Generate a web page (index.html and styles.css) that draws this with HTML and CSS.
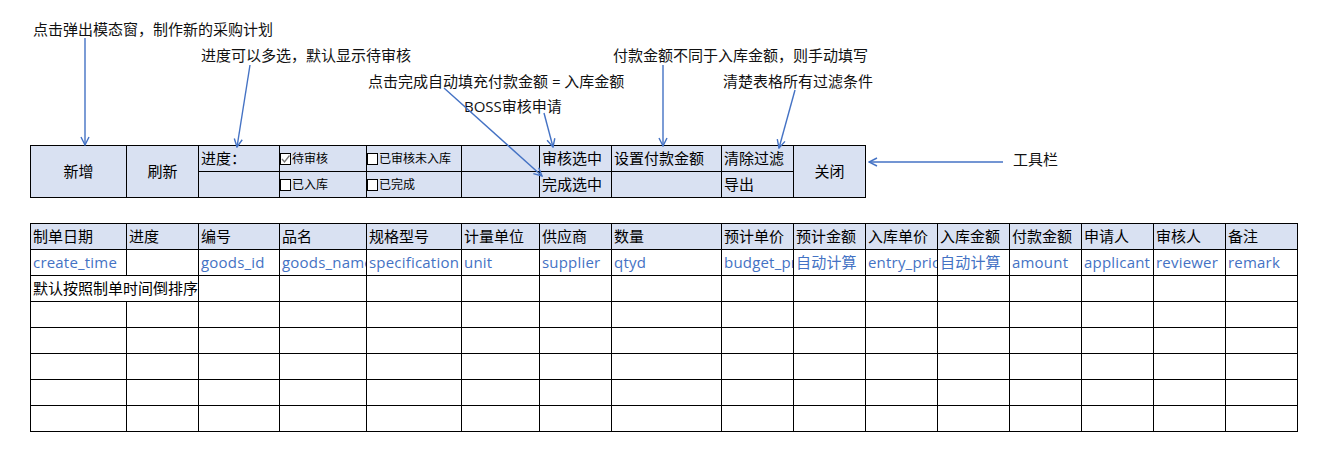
FILE: index.html
```html
<!DOCTYPE html>
<html lang="zh-CN">
<head>
    <meta charset="UTF-8">
    <meta name="viewport" content="width=device-width, initial-scale=1.0">
    <title>采购计划</title>
    <link rel="stylesheet" href="styles.css">
</head>
<body>
    <div class="sheet">
        <!-- 说明文字 -->
        <div class="note note-add">点击弹出模态窗，制作新的采购计划</div>
        <div class="note note-progress">进度可以多选，默认显示待审核</div>
        <div class="note note-finish">点击完成自动填充付款金额 = 入库金额</div>
        <div class="note note-boss">BOSS审核申请</div>
        <div class="note note-pay">付款金额不同于入库金额，则手动填写</div>
        <div class="note note-clear">清楚表格所有过滤条件</div>
        <div class="note note-toolbar">工具栏</div>

        <svg class="arrows" width="1332" height="461" viewBox="0 0 1332 461">
            <defs>
                <marker id="head" markerWidth="10" markerHeight="10" refX="9" refY="5" orient="auto" markerUnits="userSpaceOnUse">
                    <path d="M1,1 L9,5 L1,9" fill="none" stroke="#4472c4" stroke-width="1.4"/>
                </marker>
            </defs>
            <g stroke="#4472c4" stroke-width="1.4" fill="none" marker-end="url(#head)">
                <line x1="85" y1="38" x2="85" y2="145"/>
                <line x1="250" y1="65" x2="237" y2="147"/>
                <line x1="444" y1="88" x2="542" y2="176"/>
                <line x1="544" y1="113" x2="553" y2="147"/>
                <line x1="663" y1="65" x2="663" y2="146"/>
                <line x1="795" y1="90" x2="779" y2="148"/>
                <line x1="1003" y1="162" x2="869" y2="162"/>
            </g>
        </svg>

        <!-- 工具栏 -->
        <div class="toolbar">
            <div class="cell big">新增</div>
            <div class="cell big">刷新</div>
            <div class="cell">进度：</div>
            <div class="cell check"><span class="box"><svg width="9" height="10" viewBox="0 0 9 10"><path d="M1,5 L3.5,8 L8.5,1.5" fill="none" stroke="#777" stroke-width="1.3"/></svg></span>待审核</div>
            <div class="cell check"><span class="box"></span>已审核未入库</div>
            <div class="cell"></div>
            <div class="cell">审核选中</div>
            <div class="cell">设置付款金额</div>
            <div class="cell">清除过滤</div>
            <div class="cell big">关闭</div>
            <div class="cell"></div>
            <div class="cell check"><span class="box"></span>已入库</div>
            <div class="cell check"><span class="box"></span>已完成</div>
            <div class="cell"></div>
            <div class="cell">完成选中</div>
            <div class="cell"></div>
            <div class="cell">导出</div>
        </div>

        <!-- 采购计划表 -->
        <div class="grid">
            <div class="cell head">制单日期</div>
            <div class="cell head">进度</div>
            <div class="cell head">编号</div>
            <div class="cell head">品名</div>
            <div class="cell head">规格型号</div>
            <div class="cell head">计量单位</div>
            <div class="cell head">供应商</div>
            <div class="cell head">数量</div>
            <div class="cell head">预计单价</div>
            <div class="cell head">预计金额</div>
            <div class="cell head">入库单价</div>
            <div class="cell head">入库金额</div>
            <div class="cell head">付款金额</div>
            <div class="cell head">申请人</div>
            <div class="cell head">审核人</div>
            <div class="cell head">备注</div>

            <div class="cell field">create_time</div>
            <div class="cell field"></div>
            <div class="cell field">goods_id</div>
            <div class="cell field">goods_name</div>
            <div class="cell field">specification</div>
            <div class="cell field">unit</div>
            <div class="cell field">supplier</div>
            <div class="cell field">qtyd</div>
            <div class="cell field">budget_price</div>
            <div class="cell field">自动计算</div>
            <div class="cell field">entry_price</div>
            <div class="cell field">自动计算</div>
            <div class="cell field">amount</div>
            <div class="cell field">applicant</div>
            <div class="cell field">reviewer</div>
            <div class="cell field">remark</div>

            <div class="cell wide">默认按照制单时间倒排序</div>
            <div class="cell"></div><div class="cell"></div><div class="cell"></div><div class="cell"></div><div class="cell"></div><div class="cell"></div><div class="cell"></div>
            <div class="cell"></div><div class="cell"></div><div class="cell"></div><div class="cell"></div><div class="cell"></div><div class="cell"></div><div class="cell"></div>

            <div class="cell"></div><div class="cell"></div><div class="cell"></div><div class="cell"></div><div class="cell"></div><div class="cell"></div><div class="cell"></div><div class="cell"></div>
            <div class="cell"></div><div class="cell"></div><div class="cell"></div><div class="cell"></div><div class="cell"></div><div class="cell"></div><div class="cell"></div><div class="cell"></div>

            <div class="cell"></div><div class="cell"></div><div class="cell"></div><div class="cell"></div><div class="cell"></div><div class="cell"></div><div class="cell"></div><div class="cell"></div>
            <div class="cell"></div><div class="cell"></div><div class="cell"></div><div class="cell"></div><div class="cell"></div><div class="cell"></div><div class="cell"></div><div class="cell"></div>

            <div class="cell"></div><div class="cell"></div><div class="cell"></div><div class="cell"></div><div class="cell"></div><div class="cell"></div><div class="cell"></div><div class="cell"></div>
            <div class="cell"></div><div class="cell"></div><div class="cell"></div><div class="cell"></div><div class="cell"></div><div class="cell"></div><div class="cell"></div><div class="cell"></div>

            <div class="cell"></div><div class="cell"></div><div class="cell"></div><div class="cell"></div><div class="cell"></div><div class="cell"></div><div class="cell"></div><div class="cell"></div>
            <div class="cell"></div><div class="cell"></div><div class="cell"></div><div class="cell"></div><div class="cell"></div><div class="cell"></div><div class="cell"></div><div class="cell"></div>

            <div class="cell"></div><div class="cell"></div><div class="cell"></div><div class="cell"></div><div class="cell"></div><div class="cell"></div><div class="cell"></div><div class="cell"></div>
            <div class="cell"></div><div class="cell"></div><div class="cell"></div><div class="cell"></div><div class="cell"></div><div class="cell"></div><div class="cell"></div><div class="cell"></div>
        </div>
    </div>
</body>
</html>
```

FILE: styles.css
```css
body {
    margin: 0;
    padding: 0;
    background: #fff;
    color: #000;
    font-family: 'Open Sans', 'Noto Sans CJK SC', sans-serif;
    font-size: 15px;
}
.sheet {
    position: relative;
    width: 1332px;
    height: 461px;
    padding: 145px 0 0 30px;
    box-sizing: border-box;
    overflow: hidden;
}

/* callouts */
.note {
    position: absolute;
    white-space: nowrap;
    line-height: 20px;
    color: #111;
}
.note-add { left: 33px; top: 19px; }
.note-progress { left: 201px; top: 45px; }
.note-finish { left: 368px; top: 71px; }
.note-boss { left: 464px; top: 96px; }
.note-pay { left: 613px; top: 45px; }
.note-clear { left: 723px; top: 71px; }
.note-toolbar { left: 1013px; top: 149px; }
.arrows {
    position: absolute;
    left: 0;
    top: 0;
    pointer-events: none;
    z-index: 2;
}

/* spreadsheet cells */
.cell {
    box-sizing: border-box;
    border-right: 1px solid #000;
    border-bottom: 1px solid #000;
    padding: 0 0 0 2px;
    line-height: 25px;
    white-space: nowrap;
    overflow: hidden;
}
.toolbar, .grid {
    display: grid;
    width: max-content;
    border-left: 1px solid #000;
    border-top: 1px solid #000;
}
.toolbar {
    grid-template-columns: 96px 72px 81px 87px 95px 78px 72px 110px 72px 72px;
    grid-template-rows: 26px 26px;
    background: #d9e1f2;
}
.toolbar .big {
    grid-row: span 2;
    display: flex;
    align-items: center;
    justify-content: center;
    padding: 0;
}
.toolbar .check {
    padding: 0;
    font-size: 12px;
    display: flex;
    align-items: center;
}
.box {
    display: inline-flex;
    align-items: center;
    justify-content: center;
    width: 11px;
    height: 12px;
    box-sizing: border-box;
    border: 1px solid #000;
    background: #fff;
    margin-right: 1px;
}

.grid {
    margin-top: 25px;
    grid-template-columns: 96px 72px 81px 87px 95px 78px 72px 110px repeat(8, 72px);
    grid-auto-rows: 26px;
}
.grid .head { background: #d9e1f2; }
.grid .field { color: #4472c4; letter-spacing: 0.2px; }
.grid .wide { grid-column: span 2; }
```
